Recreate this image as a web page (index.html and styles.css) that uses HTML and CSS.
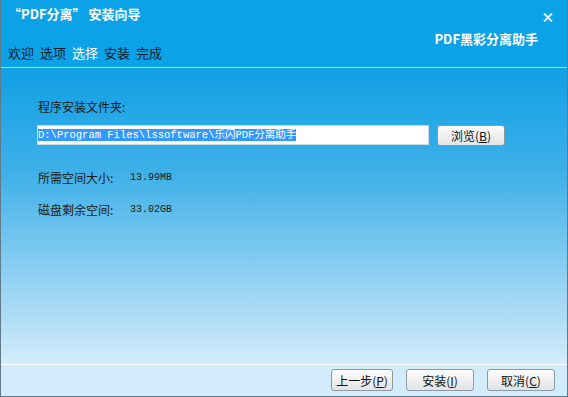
FILE: index.html
```html
<!DOCTYPE html>
<html lang="zh-CN">
<head>
    <meta charset="UTF-8">
    <title>“PDF分离” 安装向导</title>
    <link rel="stylesheet" href="styles.css">
</head>
<body>
    <div class="window">
        <div class="header">
            <div class="title">“PDF分离” 安装向导</div>
            <div class="close">
                <svg width="10" height="9" viewBox="0 0 10 9"><path d="M1 0.5 L9 8.5 M9 0.5 L1 8.5" stroke="#d6f1ff" stroke-width="2"/></svg>
            </div>
            <div class="brand">PDF黑彩分离助手</div>
            <div class="steps">
                <span>欢迎</span>
                <span>选项</span>
                <span class="current">选择</span>
                <span>安装</span>
                <span>完成</span>
            </div>
        </div>

        <div class="content">
            <div class="label">程序安装文件夹:</div>
            <div class="path-row">
                <div class="path-input"><span class="selected">D:\Program Files\lssoftware\乐闪PDF分离助手</span></div>
                <button class="btn browse">浏览(<u>B</u>)</button>
            </div>
            <div class="info">
                <span class="info-name">所需空间大小:</span>
                <span class="info-value">13.99MB</span>
            </div>
            <div class="info">
                <span class="info-name">磁盘剩余空间:</span>
                <span class="info-value">33.02GB</span>
            </div>
        </div>

        <div class="footer">
            <button class="btn prev">上一步(<u>P</u>)</button>
            <button class="btn">安装(<u>I</u>)</button>
            <button class="btn">取消(<u>C</u>)</button>
        </div>
    </div>
</body>
</html>
```

FILE: styles.css
```css
* {
    box-sizing: border-box;
}

body {
    margin: 0;
    font-family: "Noto Sans CJK SC", "DejaVu Sans", sans-serif;
    font-size: 12px;
    color: #1a1a1a;
}

.window {
    width: 568px;
    height: 397px;
    display: flex;
    flex-direction: column;
    border: 1px solid #5f7a88;
    border-top: none;
}

.header {
    position: relative;
    height: 68px;
    background-color: #0ba2e7;
    border-bottom: 1px solid #9fdcf7;
    padding: 4px 0 0 7px;
}

.title {
    color: #fff;
    font-weight: bold;
    font-size: 13px;
    line-height: 20px;
}

.close {
    position: absolute;
    top: 13px;
    right: 14px;
    line-height: 0;
}

.brand {
    position: absolute;
    top: 30px;
    right: 29px;
    color: #fff;
    font-weight: bold;
    font-size: 13px;
    line-height: 18px;
}

.steps {
    margin-top: 19px;
    display: flex;
    gap: 6px;
    font-size: 13px;
    line-height: 20px;
    color: #102030;
}

.steps .current {
    color: #fff;
}

.content {
    flex: 1;
    background: linear-gradient(#10a0e5 0%, #3eb0e8 35%, #8fd0f2 70%, #d3ecfb 100%);
    padding: 30px 0 0 36px;
    border-bottom: 1px solid #fff;
}

.label {
    line-height: 18px;
    padding-left: 1px;
}

.path-row {
    display: flex;
    gap: 8px;
    margin-top: 9px;
}

.path-input {
    width: 392px;
    height: 20px;
    background: #fff;
    border: 1px solid #c9dbe6;
    padding: 2px 0 0 0;
    font-family: "Liberation Mono", "Noto Sans CJK SC", monospace;
    font-size: 10.5px;
    line-height: 14px;
    white-space: nowrap;
    overflow: hidden;
}

.selected {
    background: #3399ff;
    color: #fff;
}

.btn {
    height: 22px;
    padding: 0;
    border: 1px solid #8e9aa3;
    border-radius: 3px;
    background: linear-gradient(#fdfdfd, #f0f0f0 50%, #e2e4e6);
    font-family: "Noto Sans CJK SC", sans-serif;
    font-size: 12px;
    color: #111;
    width: 68px;
}

.browse {
    height: 21px;
}

.info {
    margin-top: 22px;
    display: flex;
    line-height: 18px;
}

.path-row + .info {
    margin-top: 23px;
}

.info + .info {
    margin-top: 14px;
}

.info-name {
    width: 93px;
    padding-left: 1px;
}

.info-value {
    font-family: "Liberation Mono", monospace;
    font-size: 10px;
}

.footer {
    height: 31px;
    background: #d3ecfb;
    border-bottom: 1px solid #e2e6e8;
    display: flex;
    justify-content: flex-end;
    gap: 13px;
    padding: 4px 12px 0 0;
}

.footer .prev {
    width: 62px;
}
```
